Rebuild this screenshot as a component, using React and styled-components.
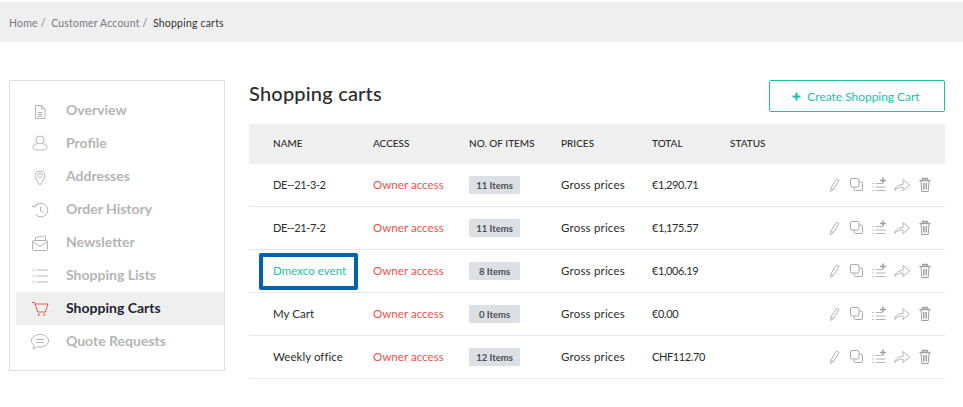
import React from "react";
import styled, { createGlobalStyle } from "styled-components";

const Global = createGlobalStyle`
  html, body { margin: 0; padding: 0; background: #fff; }
  body { font-family: "Lato", "Liberation Sans", sans-serif; color: #2b2b2b; width: 963px; overflow: hidden; }
  *, *::after { box-sizing: border-box; }
`;

const Page = styled.div`
  width: 963px;
  height: 407px;
  padding-top: 2px;
`;
const Crumbs = styled.nav`
  height: 40px;
  background: #efefef;
  display: flex;
  align-items: center;
  padding: 2px 0 0 9px;
  font-size: 10.5px;
  letter-spacing: 0.2px;
  margin-bottom: 38px;
`;
const Crumb = styled.span`
  margin-right: 5.500px;
  color: ${(p) => (p.$current ? "#333" : "#77797c")};
`;
const Body = styled.div`
  display: flex;
  align-items: flex-start;
  padding: 0 18px 0 9px;
  gap: 24px;
`;
const Side = styled.aside`
  width: 216px;
  height: 291px;
  flex: none;
  border: 1px solid #dcdfe4;
  padding: 13px 0 0 6px;
`;
const SideItem = styled.div`
  height: 33px;
  display: flex;
  align-items: center;
  background: ${(p) => (p.$active ? "#efefef" : "transparent")};
  color: ${(p) => (p.$active ? "#1f2530" : "#b5b5b5")};
  font-size: 14px;
  font-weight: 700;
`;
const SideLabel = styled.span`
  padding-bottom: 2px;
`;
const SideIcon = styled.span`
  width: 50px;
  flex: none;
  display: flex;
  padding-left: 14px;
`;
const Main = styled.main`
  flex: 1;
  min-width: 0;
`;
const Head = styled.div`
  height: 44px;
  display: flex;
  align-items: flex-start;
  justify-content: space-between;
`;
const Title = styled.h1`
  margin: 0;
  font-size: 20px;
  line-height: 26px;
  font-weight: 500;
  letter-spacing: 0.2px;
  color: #2b2b2b;
`;
const CreateBtn = styled.button`
  width: 176px;
  height: 32px;
  background: #fff;
  border: 1px solid #1ebea5;
  border-radius: 2px;
  color: #1ebea5;
  font: 400 12px "Lato", sans-serif;
  letter-spacing: -0.03px;
  display: flex;
  align-items: center;
  justify-content: center;
  gap: 6px;
  padding: 0 2px 0 0;
`;
const Row = styled.div`
  display: grid;
  grid-template-columns: 100px 96px 92px 91px 78px 1fr auto;
  align-items: center;
  padding: 0 8px 0 24px;
  height: ${(p) => (p.$header ? "40px" : "43px")};
  background: ${(p) => (p.$header ? "#efefef" : "transparent")};
  border-bottom: ${(p) => (p.$header ? "none" : "1px solid #e6e8ec")};
  font-size: ${(p) => (p.$header ? "10px" : "11.5px")};
  font-weight: ${(p) => (p.$header ? 500 : 400)};
  color: #2b2b2b;
`;
const Text = styled.span`
  display: block;
  padding-bottom: 2px;
`;
const Name = styled.span`
  position: relative;
  font-size: ${(p) => (p.$numeric ? "11px" : "11.5px")};
  letter-spacing: ${(p) => (p.$numeric ? "-0.4px" : "0.05px")};
  color: ${(p) => (p.$link ? "#1ebea5" : "#2b2b2b")};
  ${(p) =>
    p.$focus &&
    `&::after {
      content: "";
      position: absolute;
      left: -14px;
      top: -11px;
      width: 99px;
      height: 37px;
      border: 4px solid #0062ad;
      border-radius: 2px;
    }`}
`;
const Access = styled(Text)`
  color: #f0524b;
  letter-spacing: 0.05px;
`;
const Badge = styled.span`
  width: 51px;
  height: 18px;
  background: #dcdfe4;
  border-radius: 1px;
  font-size: 9.5px;
  font-weight: 700;
  color: #4a4d52;
  display: flex;
  align-items: center;
  justify-content: center;
`;
const Cell = styled(Text)`
  letter-spacing: 0.2px;
`;
const Total = styled(Text)`
  font-size: 11px;
  letter-spacing: -0.4px;
`;
const Actions = styled.span`
  display: flex;
  align-items: center;
  gap: 2px;
`;

const I = ({ children, size = 20, w = size, h = size, color = "#b4b4b4" }) => (
  <svg width={w} height={h} viewBox={`0 0 ${w} ${h}`} fill="none" stroke={color} strokeWidth="1">
    {children}
  </svg>
);

const icons = {
  doc: (
    <I>
      <path d="M5.500 4.500h6l3.500 3.500v9.500h-9.500z" />
      <path d="M11.500 4.500v3.500h3.500M7.500 11.500h5M7.500 13.500h5M7.500 15.500h5" />
    </I>
  ),
  user: (
    <I>
      <circle cx="10" cy="6" r="4" />
      <path d="M7.500 9.500c-2.500.7-4.500 2-4.500 4 0 1.800 2 2.500 7 2.500s7-.7 7-2.500c0-2-2-3.300-4.500-4" />
    </I>
  ),
  pin: (
    <I>
      <path d="M10 18c-2.500-3.500-4.800-6.500-4.800-9.300a4.800 4.800 0 0 1 9.600 0c0 2.800-2.300 5.800-4.800 9.300z" />
      <circle cx="10" cy="8.500" r="2.200" />
    </I>
  ),
  history: (
    <I>
      <path d="M5.200 6.500a6.800 6.800 0 1 1 .6 8" />
      <path d="M2 6l3.200 1 1-3M10.500 6.500v4.500l3 2" />
    </I>
  ),
  mail: (
    <I>
      <path d="M2.500 8.500a1 1 0 0 1 1-1h13a1 1 0 0 1 1 1v8a1 1 0 0 1-1 1h-13a1 1 0 0 1-1-1zM2.500 8.500l7.500 5 7.500-5" />
      <path d="M5.500 7V4.500l8-1.500h2V7" />
    </I>
  ),
  list: (
    <I>
      <path d="M6.500 4h11.500M6.500 10h11.500M6.500 16h11.500" />
      <path d="M2 4h3M2 10h3M2 16h3" strokeDasharray="1 1" />
    </I>
  ),
  cart: (
    <I color="#ef5a50">
      <path d="M2 3.500h2.500l3.200 9.500h7.600l2.700-8H5" />
      <path d="M8 15.800h1.600M13.500 15.800h1.600" strokeWidth="2" />
    </I>
  ),
  chat: (
    <I>
      <path d="M10 2.500c-4.800 0-8.500 2.800-8.500 6.300 0 1.900 1 3.500 2.700 4.700l-1 3.500 4.200-2.300c.8.200 1.700.300 2.600.300 4.800 0 8.500-2.800 8.500-6.200S14.800 2.500 10 2.500z" />
      <path d="M6 7.500h8M6 10.500h8" />
    </I>
  ),
};

const ActionIcons = () => (
  <Actions>
    <I w={20} h={16}>
      <path d="M5.500 14.500l.5-3.500 5.500-9 2.500 1.500-5.500 9zM6 11l2.500 1.500" />
    </I>
    <I w={20} h={16} color="#a8a8a8">
      <path d="M5 1.500h5.500a1.500 1.500 0 0 1 1.500 1.500v5.500a1.500 1.500 0 0 1-1.500 1.500H5a1.500 1.500 0 0 1-1.500-1.500V3A1.500 1.500 0 0 1 5 1.500z" />
      <path d="M12.500 5h1.500a1.500 1.500 0 0 1 1.500 1.500V12a1.500 1.500 0 0 1-1.500 1.500H8.500A1.500 1.500 0 0 1 7 12v-1.500" />
    </I>
    <I w={20} h={16}>
      <path d="M7 6.500h6.500M7 10h9.500M7 13.500h9.500" />
      <path d="M3 6.500h2.500M3 10h2.500M3 13.500h2.500" strokeDasharray="1 .7" />
      <path d="M14 0.500v6M11 3.500h6" strokeWidth="1.500" stroke="#a0a0a0" />
    </I>
    <I w={20} h={16}>
      <path d="M3.500 13.500c1-3.700 4-6 8.500-6V2.500l6.500 5.500-6.500 5.500v-3.500c-3.500 0-6 1-8.500 3.500z" />
    </I>
    <I w={24} h={16} color="#a0a0a0">
      <path d="M6.500 3.500h11M9.800 3V1.500h4.400V3" strokeWidth="1.400" />
      <path d="M8 4l.8 10.500h6.400L16 4" />
      <path d="M10.500 6v6.500M12 6v6.500M13.500 6v6.500" />
    </I>
  </Actions>
);

const nav = [
  ["doc", "Overview"],
  ["user", "Profile"],
  ["pin", "Addresses"],
  ["history", "Order History"],
  ["mail", "Newsletter"],
  ["list", "Shopping Lists"],
  ["cart", "Shopping Carts", true],
  ["chat", "Quote Requests"],
];

const rows = [
  { name: "DE--21-3-2", items: "11 Items", total: "€1,290.71", numeric: true },
  { name: "DE--21-7-2", items: "11 Items", total: "€1,175.57", numeric: true },
  { name: "Dmexco event", items: "8 Items", total: "€1,006.19", focus: true },
  { name: "My Cart", items: "0 Items", total: "€0.00" },
  { name: "Weekly office", items: "12 Items", total: "CHF112.70" },
];

export default function App() {
  return (
    <Page>
      <Global />
      <Crumbs>
        <Crumb>Home /</Crumb>
        <Crumb>Customer Account /</Crumb>
        <Crumb $current>Shopping carts</Crumb>
      </Crumbs>
      <Body>
        <Side>
          {nav.map(([icon, label, active]) => (
            <SideItem key={label} $active={active}>
              <SideIcon>{icons[icon]}</SideIcon>
              <SideLabel>{label}</SideLabel>
            </SideItem>
          ))}
        </Side>
        <Main>
          <Head>
            <Title>Shopping carts</Title>
            <CreateBtn>
              <svg width="9" height="9" viewBox="0 0 9 9" fill="none" stroke="#1ebea5" strokeWidth="2">
                <path d="M4.500 0.500v8M0.500 4.500h8" />
              </svg>
              Create Shopping Cart
            </CreateBtn>
          </Head>
          <Row $header>
            <Text>NAME</Text>
            <Text>ACCESS</Text>
            <Text>NO. OF ITEMS</Text>
            <Text>PRICES</Text>
            <Text>TOTAL</Text>
            <Text>STATUS</Text>
            <span />
          </Row>
          {rows.map((r) => (
            <Row key={r.name}>
              <Text>
                <Name $link={r.focus} $focus={r.focus} $numeric={r.numeric}>
                  {r.name}
                </Name>
              </Text>
              <Access>Owner access</Access>
              <span>
                <Badge>{r.items}</Badge>
              </span>
              <Cell>Gross prices</Cell>
              <Total>{r.total}</Total>
              <span />
              <ActionIcons />
            </Row>
          ))}
        </Main>
      </Body>
    </Page>
  );
}
